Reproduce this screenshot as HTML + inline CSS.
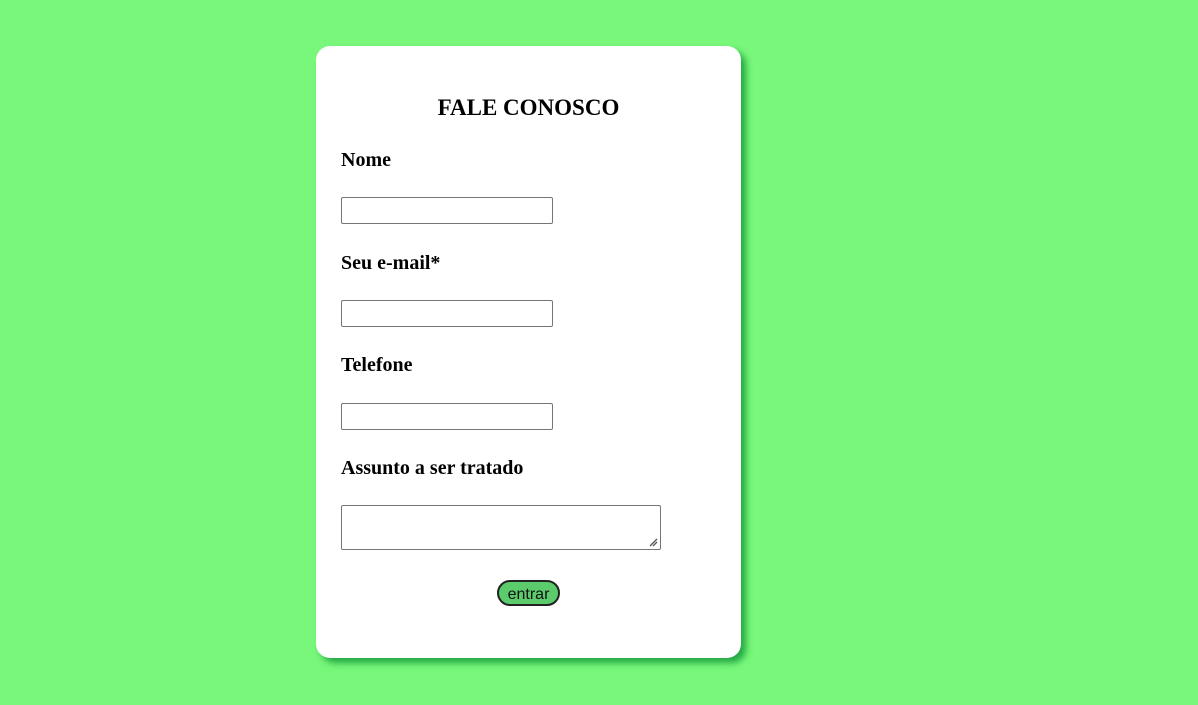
<!DOCTYPE html>
<html><head><style>
html,body{margin:0;padding:0;}
body{width:1198px;height:705px;background:#78f77a;position:relative;overflow:hidden;font-family:"Liberation Serif",serif;}
.card{position:absolute;left:316px;top:46px;width:425px;height:612px;background:#fff;border-radius:14px;box-shadow:5px 5px 7px #25a844;}
.t{position:absolute;width:425px;text-align:center;top:95px;font-weight:bold;font-size:23px;margin:0;}
.l{position:absolute;left:341px;font-weight:bold;font-size:20px;}
.i{position:absolute;left:341px;width:210px;height:25px;border:1px solid #767676;border-radius:2px;background:#fff;}
.ta{position:absolute;left:341px;top:505px;width:318px;height:43px;border:1px solid #767676;border-radius:2px;background:#fff;}
.btn{position:absolute;left:497px;top:580px;width:59px;height:22px;border:2px solid #222;border-radius:13px;background:#5bcb6b;font-family:"Liberation Sans",sans-serif;font-size:16px;text-align:center;line-height:25px;color:#111;}
</style></head><body>
<div class="card"></div>
<div class="t" style="left:316px">FALE CONOSCO</div>
<div class="l" style="top:149px">Nome</div>
<div class="i" style="top:197px"></div>
<div class="l" style="top:252px">Seu e-mail*</div>
<div class="i" style="top:300px"></div>
<div class="l" style="top:354px">Telefone</div>
<div class="i" style="top:403px"></div>
<div class="l" style="top:457px">Assunto a ser tratado</div>
<div class="ta"><svg style="position:absolute;right:2px;bottom:2px" width="9" height="9"><path d="M1 8L8 1M4 8L8 4" stroke="#555" stroke-width="1.3"/></svg></div>
<div class="btn">entrar</div>
</body></html>
